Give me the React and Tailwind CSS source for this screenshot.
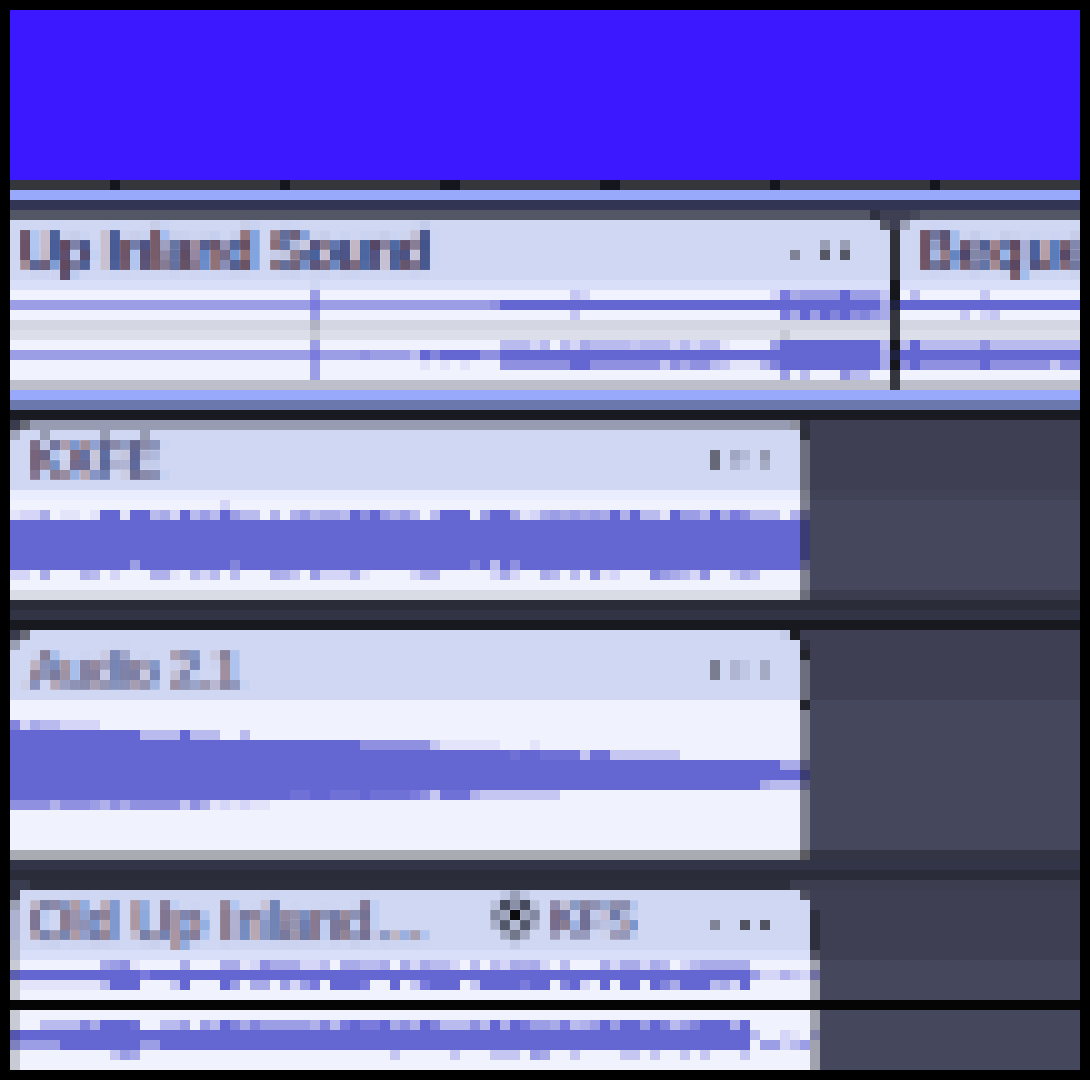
import React from "react";

const palette = {
  W: "#f0f3fe", D: "#6466d2", l: "#6f71d6", a: "#7a7bdc", b: "#8385dc", c: "#8f91e0", d: "#9c9ee5",
  e: "#a9abe8", f: "#b0b1ea", g: "#b9baee", h: "#c5c6f2", i: "#d5d6f7", j: "#e3e4fa",
  x: "#d4d7e3", y: "#dcdfe9", m: "#b1b3c2", n: "#c8cad4", E: "#d9dff8", F: "#cfd7f3",
  p: "#7f8090", q: "#555678", r: "#3c3c75", s: "#5c5c80", t: "#d9dbe5", u: "#6c6e7c",
  v: "#e9edfd", k: "#7a7b88", z: "#22232a", A: "#a9abb3", B: "#5c5c60",
  o: "#5c5fb0", P: "#a0a2ae", Q: "#6f70a0", R: "#8384a8", S: "#5355ae", T: "#7f80c0",
};

// each row is run-length coded, one cell = 10px
const mainRows = [
  "E30 F1 E57",
  "W30 d1 W25 h1 i1 W18 i1 a1 e1 d4 D1 d3 h1",
  "d30 a1 d17 c1 D38 e1",
  "W30 d1 W25 h1 W20 a1 e1 D1 d1 D1 b1 D1 c1 b1 d1 e1",
  "x30 m1 x57",
  "y30 n1 y46 n1 y10",
  "W30 d1 W18 g3 i1 g1 W1 g1 i1 e1 g4 h1 g3 i1 g1 i1 g2 j1 W4 d1 D10 g1",
  "d30 a1 d4 c1 d4 g1 D1 b1 D4 c2 D38 e1",
  "W30 d1 W10 j1 W1 j1 W1 j1 W3 c7 D2 c7 h1 c1 e1 c2 g1 h1 j3 f1 b1 D10 e1",
  "W30 d1 W46 d1 W1 g1 W3 c1 g2 W2",
];

const sideRows = [
  "E18",
  "W1 g1 W6 h1 W9",
  "D18",
  "W6 h1 W1 i1 h1 W8",
  "x18",
  "y18",
  "g1 D1 g6 c1 g9",
  "D18",
  "c1 D1 c6 D1 c6 h1 c2",
  "W18",
];

const kxfeRows = [
  "v79 k1",
  "W21 i1 W57 p1",
  "j1 i2 e1 W1 j2 W1 j1 D2 j1 D2 g1 e1 i1 D1 g1 d1 g1 D1 d1 g2 W1 f1 W1 f1 d1 g1 e2 g1 D1 c1 D1 d1 f1 d1 g1 W1 g1 D3 W1 d1 D2 e1 j1 i1 e1 d1 e1 d1 e1 d1 e1 D1 f1 D1 g2 j1 D1 d2 g1 D1 e1 a1 c1 g3 W1 f1 q1",
  "D79 r1",
  "D79 r1",
  "D79 r1",
  "D79 r1",
  "D12 d1 D9 b1 D23 b1 D1 g1 D1 c1 D28 s1",
  "i2 W1 e1 W3 f1 g1 W1 i1 W3 f2 j1 W1 g1 i1 g1 W1 g1 W3 e1 f1 h1 W1 d1 i3 e1 j1 W4 i1 f2 W5 i1 e1 i1 W2 e1 g1 W1 g1 W1 c1 j1 i1 W3 b1 d1 e1 g1 i1 c1 W2 h1 e1 g1 W4 p1",
  "W79 p1",
  "t79 u1",
];

const audioRows = [
  "W79 z1",
  "W79 p1",
  "b1 i1 e1 g2 i4 W70 p1",
  "D13 g4 D1 g3 W2 g1 W55 p1",
  "D35 c7 h1 j6 W3 j1 W26 p1",
  "D50 l1 D2 l4 h1 l2 h7 W12 p1",
  "D77 e2 q1",
  "D79 r1",
  "D75 e1 g3 s1",
  "D28 l2 D2 l3 D1 l4 a1 c1 h1 l3 f1 h8 W24 p1",
  "c4 f1 c3 d1 f1 c1 e1 c5 h1 c1 f1 j1 i1 j1 i1 j2 W53 p1",
  "W79 p1",
  "W79 p1",
  "W79 p1",
  "W79 p1",
  "A79 B1",
];

const oldRowsTop = [
  "n1 W8 e1 d1 c1 j1 W4 e1 W3 e2 j1 i1 c1 e3 i2 g1 W1 e2 g2 e1 W1 e1 i1 e1 g2 i1 W1 g1 W1 g1 i1 e1 f1 e1 i1 W1 g1 W3 e1 i1 e2 i1 e1 g1 W1 i1 g1 e5 W6 P1",
  "o1 D12 a1 D60 d1 i2 f1 h1 i1 Q1",
  "n1 j8 g1 D3 W3 h1 D1 W3 D1 d1 W1 e2 W1 d1 i1 d1 a1 W1 D3 a1 W2 D1 W1 h1 a1 D3 W1 h1 D4 a1 D2 W1 b1 D1 i1 W1 D1 W1 D2 W1 D1 b1 e1 D3 g1 e1 i1 D1 W6 P1",
  "n1 W79 P1",
];

const oldRowsBottom = [
  "n1 W79 P1",
  "n1 W2 g4 b1 e1 D3 l1 W2 g2 d1 W1 d1 g1 D1 b1 e1 b1 d5 f1 b1 g1 a1 D1 a2 D1 e1 c1 f1 D1 b1 g3 c1 g1 D1 f1 D1 a1 d2 e1 a1 g1 f1 d1 D1 d1 D2 d1 D1 b1 g1 d1 b1 D3 f1 D1 W6 P1",
  "S1 D73 g1 W2 i1 j1 W1 R1",
  "T1 d4 D8 d2 D59 W1 d2 i1 g1 d1 P1",
  "n1 W9 h1 d1 e1 W25 h1 W5 h1 W3 h3 W1 d1 e1 W2 h1 W4 h2 W1 h1 W2 h1 W1 h1 W3 h1 W6 P1",
  "n1 W79 P1",
];

function Wave({ rows, cells }) {
  const rects = [];
  rows.forEach((row, y) => {
    let x = 0;
    for (const run of row.split(" ")) {
      const w = Number(run.slice(1));
      rects.push(<rect key={`${y}-${x}`} x={x * 10} y={y * 10} width={w * 10} height={10} fill={palette[run[0]]} />);
      x += w;
    }
  });
  return (
    <svg width={cells * 10} height={rows.length * 10} shapeRendering="crispEdges" className="block shrink-0">
      {rects}
    </svg>
  );
}

function Dot({ top, bottom, mt = "mt-0" }) {
  return (
    <div className={`w-[10px] ${mt}`}>
      {top && <div className="h-[10px]" style={{ background: top }} />}
      {bottom && <div className="h-[10px]" style={{ background: bottom }} />}
    </div>
  );
}

const titleClass =
  "font-['Liberation_Sans',sans-serif] text-[#37345a] whitespace-nowrap [filter:url(#mosaic)] [text-shadow:-3px_0_#b8704f,3px_0_#3f8cf2]";

export default function App() {
  return (
    <div className="w-[1090px] h-[1080px] bg-black px-[10px] pt-[10px] overflow-hidden">
      <svg className="absolute w-0 h-0">
        <filter id="mosaic" x="0" y="0" width="100%" height="100%" colorInterpolationFilters="sRGB">
          <feFlood x="4" y="4" width="2" height="2" floodColor="#000" />
          <feComposite width="10" height="10" />
          <feTile result="grid" />
          <feGaussianBlur in="SourceGraphic" stdDeviation="2.5" result="soft" />
          <feComposite in="soft" in2="grid" operator="in" />
          <feMorphology operator="dilate" radius="4" />
        </filter>
      </svg>

      <div className="h-[170px] bg-[#3b18ff]" />

      {/* ruler ticks */}
      <div className="h-[10px] bg-[#34363c] flex">
        <div className="w-[10px] ml-[100px] bg-[#14161e]" />
        <div className="w-[10px] ml-[160px] bg-[#14161e]" />
        <div className="w-[20px] ml-[150px] bg-[#14161e]" />
        <div className="w-[20px] ml-[140px] bg-[#14161e]" />
        <div className="w-[10px] ml-[150px] bg-[#14161e]" />
        <div className="w-[10px] ml-[150px] bg-[#14161e]" />
      </div>
      <div className="h-[10px] bg-[#98a9fc]" />
      <div className="h-[10px] bg-[#323654]" />
      <div className="h-[10px] bg-[#535665] flex">
        <div className="w-[10px] ml-[860px] bg-[#2f3140]" />
        <div className="w-[30px] bg-[#3e3f52]" />
        <div className="w-[10px] bg-[#47495a]" />
      </div>

      {/* main lane */}
      <div className="flex">
        <div className="w-[880px]">
          <div className="relative h-[60px] bg-[#cfd7f3] flex">
            <div className={`flex-1 pl-[10px] text-[55px] leading-[60px] ${titleClass}`}>Up Inland Sound</div>
            <div className="flex pr-[40px] pt-[20px] shrink-0">
              <Dot bottom="#7f8294" top="transparent" />
              <Dot top="#9a9eb4" bottom="#555864" mt="ml-[20px]" />
              <Dot top="#9a9eb4" bottom="#555864" mt="ml-[10px]" />
            </div>
            <div className="absolute right-0 top-0 w-[10px] h-[10px] bg-[#545664]" />
          </div>
          <Wave rows={mainRows} cells={88} />
          <div className="h-[10px] bg-[#bdc0ca]" />
        </div>
        <div className="w-[10px] flex flex-col">
          <div className="h-[10px] bg-[#3e3f52]" />
          <div className="h-[50px] bg-[#2f3038]" />
          <div className="h-[20px] bg-[#16171c]" />
          <div className="h-[10px] bg-[#202340]" />
          <div className="h-[30px] bg-[#34353d]" />
          <div className="h-[10px] bg-[#16171c]" />
          <div className="h-[10px] bg-[#202340]" />
          <div className="h-[10px] bg-[#16171c]" />
          <div className="h-[20px] bg-[#34353d]" />
        </div>
        <div className="flex-1 overflow-hidden">
          <div className="relative h-[60px] bg-[#cfd7f3]">
            <div className={`pl-[20px] text-[55px] leading-[60px] tracking-[3px] ${titleClass}`}>Bequest</div>
            <div className="absolute left-0 top-0 w-[10px] h-[10px] bg-[#9ea2b8]" />
          </div>
          <Wave rows={sideRows} cells={18} />
          <div className="h-[10px] bg-[#bdc0ca]" />
        </div>
      </div>
      <div className="h-[10px] bg-[#98a9fc]" />
      <div className="h-[10px] bg-[#6b78ae]" />
      <div className="h-[10px] bg-[#1a1b22]" />

      {/* KXFE track */}
      <div className="flex">
        <div className="w-[800px]">
          <div className="h-[10px] bg-[#989cb3] flex">
            <div className="w-[10px] bg-[#3a3b4c]" />
            <div className="w-[10px] bg-[#6a6b78]" />
            <div className="w-[10px] ml-[760px] bg-[#8e90a0]" />
            <div className="w-[10px] bg-[#2f3140]" />
          </div>
          <div className="flex">
            <div className="relative w-[790px] h-[60px] bg-[#cfd7f3] flex">
              <div className={`flex-1 pl-[20px] text-[50px] leading-[60px] opacity-85 ${titleClass}`}>KXFE</div>
              <div className="flex pr-[30px] pt-[20px] shrink-0">
                <Dot top="#666878" bottom="#666878" />
                <Dot top="#a0a6c0" bottom="#b0b6d4" mt="ml-[10px]" />
                <Dot top="#b3bad8" bottom="#c4cbe8" />
                <Dot top="#9499b0" bottom="#a6abc4" mt="ml-[10px]" />
              </div>
              <div className="absolute left-0 top-0 w-[10px] h-[10px] bg-[#a0a5bb]" />
              <div className="absolute left-[30px] top-0 w-[10px] h-[10px] bg-[#989cb3]" />
              <div className="absolute left-[90px] top-0 w-[10px] h-[10px] bg-[#989cb3]" />
              <div className="absolute left-[130px] top-0 w-[10px] h-[10px] bg-[#989cb3]" />
            </div>
            <div className="w-[10px] flex flex-col">
              <div className="h-[10px] bg-[#2c2e38]" />
              <div className="h-[50px] bg-[#6c6e7e]" />
            </div>
          </div>
          <Wave rows={kxfeRows} cells={80} />
        </div>
        <div className="flex-1">
          <div className="h-[70px] bg-[#3e3f52]" />
          <div className="h-[10px] bg-[#404256]" />
          <div className="h-[90px] bg-[#45485c]" />
          <div className="h-[10px] bg-[#3b3d4e]" />
        </div>
      </div>
      <div className="h-[10px] bg-[#2a2c38]" />
      <div className="h-[10px] bg-[#313444]" />
      <div className="h-[10px] bg-[#18191e]" />

      {/* Audio 2.1 track */}
      <div className="flex">
        <div className="w-[800px]">
          <div className="flex">
            <div className="relative w-[790px] h-[70px] bg-[#cfd7f3] flex">
              <div className={`flex-1 pl-[20px] pt-[10px] text-[50px] leading-[60px] opacity-65 ${titleClass}`}>Audio 2.1</div>
              <div className="flex pr-[30px] pt-[30px] shrink-0">
                <Dot top="#7a7d90" bottom="#7a7d90" />
                <Dot top="#afb4d0" bottom="#afb4d0" mt="ml-[10px]" />
                <Dot top="#c0c7e4" bottom="#c0c7e4" />
                <Dot top="#a4a9c4" bottom="#a4a9c4" mt="ml-[10px]" />
              </div>
              <div className="absolute left-0 top-0 w-[10px] h-[10px] bg-[#3a3b4c]" />
              <div className="absolute left-[10px] top-0 w-[10px] h-[10px] bg-[#6a6b78]" />
              <div className="absolute left-0 top-[10px] w-[10px] h-[10px] bg-[#9a9fb4]" />
              <div className="absolute right-0 top-0 w-[10px] h-[10px] bg-[#1a1c22]" />
              <div className="absolute right-[10px] top-0 w-[10px] h-[10px] bg-[#c5cce8]" />
            </div>
            <div className="w-[10px] flex flex-col">
              <div className="h-[10px] bg-[#3e3f52]" />
              <div className="h-[10px] bg-[#2f3140]" />
              <div className="h-[10px] bg-[#22232a]" />
              <div className="h-[40px] bg-[#6c6e7e]" />
            </div>
          </div>
          <Wave rows={audioRows} cells={80} />
        </div>
        <div className="flex-1">
          <div className="h-[70px] bg-[#3e3f52]" />
          <div className="h-[150px] bg-[#45485c]" />
          <div className="h-[10px] bg-[#343544]" />
        </div>
      </div>
      <div className="h-[10px] bg-[#323548]" />
      <div className="h-[10px] bg-[#2a2d39]" />
      <div className="h-[10px] bg-[#2c2f3b] flex">
        <div className="w-[20px] bg-[#3a3c50]" />
        <div className="w-[290px] ml-[760px] bg-[#3c3e50]" />
      </div>

      {/* Old Up Inland track */}
      <div className="flex h-[70px]">
        <div className="w-[10px] flex flex-col">
          <div className="h-[10px] bg-[#3a3c4e]" />
          <div className="h-[10px] bg-[#9a9fb4]" />
          <div className="h-[30px] bg-[#adb2d0]" />
          <div className="h-[20px] bg-[#b6bad0]" />
        </div>
        <div className="w-[790px]">
          <div className="relative h-[60px] bg-[#cfd7f3] flex">
            <div className={`w-[470px] pl-[10px] pt-[2px] text-[56px] leading-[58px] opacity-70 ${titleClass}`}>Old Up Inland…</div>
            <div className="w-[170px] flex [filter:url(#mosaic)]">
              <svg width="50" height="60" viewBox="0 0 50 60" className="shrink-0">
                <circle cx="25" cy="26" r="16" fill="none" stroke="#2c3040" strokeWidth="7" />
                <circle cx="25" cy="25" r="6" fill="#000" />
                <path d="M25 42v10" stroke="#7a7e90" strokeWidth="6" />
              </svg>
            </div>
            <div className="flex-1 flex">
              <div className="flex pt-[30px] ml-[50px] h-[10px] shrink-0">
                <div className="w-[10px] h-[10px] bg-[#7f8294]" />
                <div className="w-[10px] h-[10px] ml-[20px] bg-[#50535f]" />
                <div className="w-[10px] h-[10px] ml-[10px] bg-[#50535f]" />
              </div>
            </div>
            <div className={`absolute left-[530px] top-0 text-[44px] leading-[60px] opacity-80 ${titleClass}`}>KFS</div>
            <div className="absolute right-0 top-0 w-[10px] h-[10px] bg-[#4e5060]" />
          </div>
          <div className="h-[10px] bg-[#d9dff8]" />
        </div>
        <div className="w-[10px] flex flex-col">
          <div className="h-[20px] bg-[#3e3f52]" />
          <div className="h-[40px] bg-[#2e303e]" />
          <div className="h-[10px] bg-[#505262]" />
        </div>
        <div className="flex-1 bg-[#3e3f52]" />
      </div>
      <div className="flex">
        <Wave rows={oldRowsTop} cells={81} />
        <div className="flex-1 bg-[#45485c]" />
      </div>
      <div className="h-[10px] bg-[#050505]" />
      <div className="flex">
        <Wave rows={oldRowsBottom} cells={81} />
        <div className="flex-1 bg-[#45485c]" />
      </div>
    </div>
  );
}
